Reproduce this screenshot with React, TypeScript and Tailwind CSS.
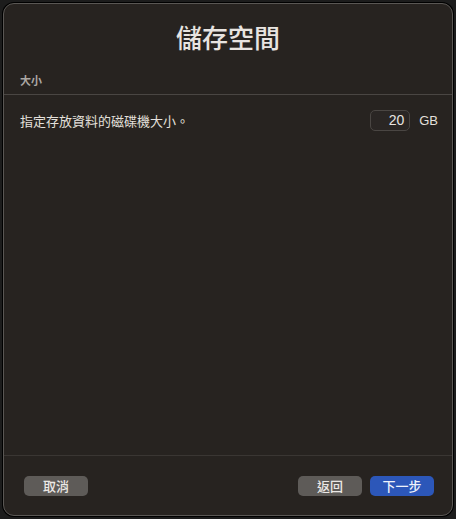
export default function App() {
  const font = { fontFamily: '"Noto Sans CJK TC", "Noto Sans", sans-serif' };
  return (
    <div className="flex h-[519px] w-[456px] bg-[#1c1c1c] p-[3px]" style={font}>
      <div className="flex flex-1 flex-col rounded-[11px] border border-[#5a5754] bg-[#272320] shadow-[0_0_0_1px_#000]">
        {/* Title */}
        <h1 className="mt-[17px] text-center text-[26px] leading-[32px] font-medium text-[#e8e4e0]">
          儲存空間
        </h1>

        {/* Section */}
        <div className="mt-[19px] px-[16px] text-[11px] leading-[16px] font-bold text-[#aca8a4]">
          大小
        </div>
        <div className="mt-[6px] h-px bg-[#4a4643]" />

        <div className="mt-[15px] flex items-center pl-[16px] pr-[14px]">
          <span className="flex-1 text-[13px] text-[#e4e0dc]">指定存放資料的磁碟機大小。</span>
          <div className="flex h-[21px] w-[40px] items-center justify-end rounded-[5px] border border-[#4a4643] bg-[#2a2624] pr-[5px] text-[14px] text-[#e8e4e0]" style={{ fontFamily: '"Liberation Sans", sans-serif' }}>
            20
          </div>
          <span className="ml-[9px] text-[13px] text-[#e4e0dc]" style={{ fontFamily: '"Liberation Sans", sans-serif' }}>
            GB
          </span>
        </div>

        <div className="flex-1" />

        {/* Footer */}
        <div className="h-px bg-[#3a3633]" />
        <div className="flex items-center pl-[20px] pr-[18px] pt-[20px] pb-[19px]">
          <button className="h-[20px] w-[64px] rounded-[5px] bg-[#5e5b58] text-[13px] leading-[20px] font-medium text-[#ebe8e5]">
            取消
          </button>
          <div className="flex-1" />
          <button className="h-[20px] w-[64px] rounded-[5px] bg-[#5e5b58] text-[13px] leading-[20px] font-medium text-[#ebe8e5]">
            返回
          </button>
          <button className="ml-[8px] h-[20px] w-[64px] rounded-[5px] bg-[#2c57b9] text-[13px] leading-[20px] font-medium text-[#eef2fb]">
            下一步
          </button>
        </div>
      </div>
    </div>
  );
}
